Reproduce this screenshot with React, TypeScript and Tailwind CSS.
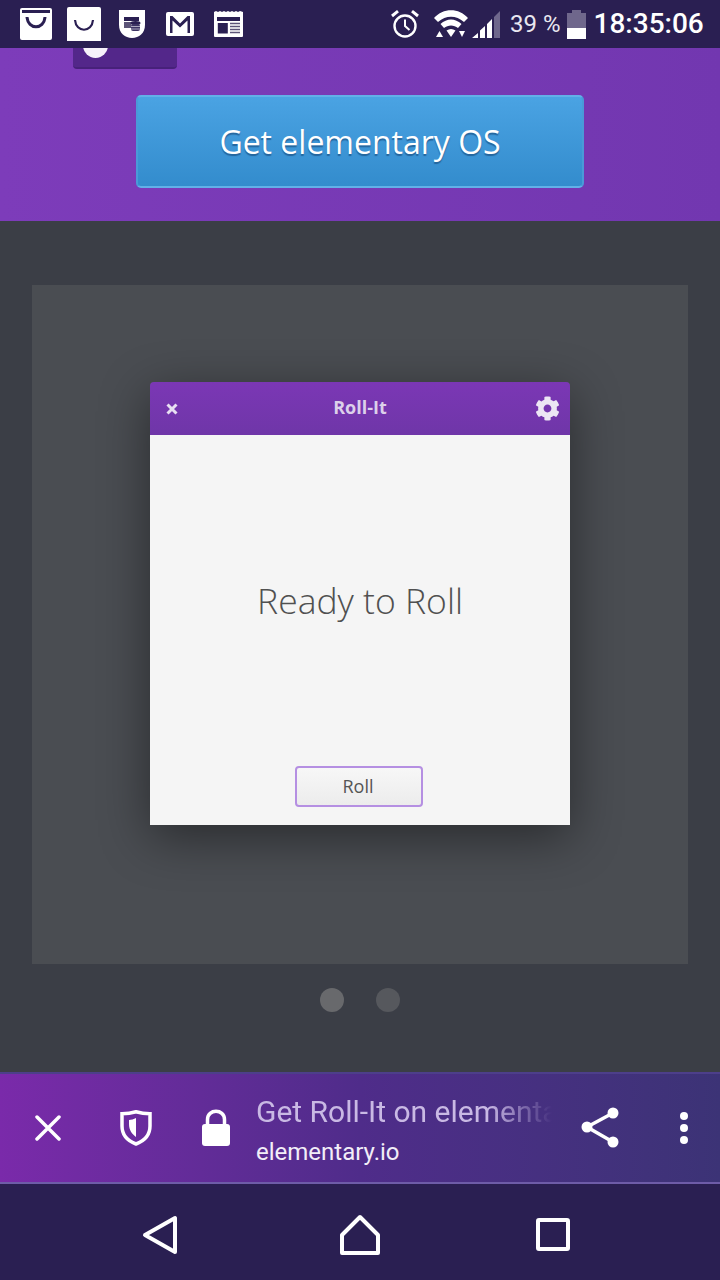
import { FaCog } from 'react-icons/fa';

function BagIcon() {
  return (
    <svg width="32" height="32" viewBox="0 0 32 32" className="ml-5">
      <rect x="0" y="0" width="32" height="32" rx="2" fill="#fff" />
      <rect x="2" y="2" width="28" height="3" fill="#2a1f52" />
      <path d="M7 9 C8 22 24 22 25 9" fill="none" stroke="#2a1f52" strokeWidth="3" />
    </svg>
  );
}

function BagIconAlt() {
  return (
    <svg width="34" height="34" viewBox="0 0 34 34" className="ml-[15px]">
      <path d="M2 0 H32 Q34 0 34 2 V34 H0 V2 Q0 0 2 0 Z" fill="#fff" />
      <path d="M8 13 C9 26 25 26 26 13" fill="none" stroke="#2a1f52" strokeWidth="2.200" />
    </svg>
  );
}

function ShieldIcon() {
  return (
    <svg width="28" height="28" viewBox="0 0 28 28" className="ml-[17px]">
      <path d="M1 0 H27 V15 C27 23 21 28 14 28 C7 28 1 23 1 15 Z" fill="#fff" />
      <rect x="6" y="7" width="15" height="4" fill="#2a1f52" />
      <rect x="6" y="12" width="7" height="6" fill="#5c5478" />
      <ellipse cx="17.500" cy="13" rx="5" ry="2" fill="#2a1f52" />
      <rect x="13" y="14" width="9" height="7" rx="2" fill="#3d3364" />
      <path d="M13 16.500 H22 M13 19 H22" stroke="#c9c5d6" strokeWidth="0.800" />
    </svg>
  );
}

function MailIcon() {
  return (
    <svg width="28" height="24" viewBox="0 0 28 24" className="ml-5">
      <rect x="0" y="0" width="28" height="24" rx="2" fill="#fff" />
      <path d="M4 21 V4 H6.500 L14 11.500 L21.500 4 H24 V21 H21.500 V8.500 L14 15.500 L6.500 8.500 V21 Z" fill="#2a1f52" />
    </svg>
  );
}

function NewsIcon() {
  return (
    <svg width="29" height="26" viewBox="0 0 29 26" className="ml-5">
      <path d="M0 1 L2 0 L4 1 L6 0 L8 1 L10 0 L12 1 L14 0 L16 1 L18 0 L20 1 L22 0 L24 1 L26 0 L29 1 V25 Q29 26 28 26 H1 Q0 26 0 25 Z" fill="#fff" />
      <rect x="3" y="6" width="23" height="4" fill="#2a1f52" />
      <rect x="3.800" y="12" width="10" height="10.500" fill="#2a1f52" />
      <path d="M16 12.500 H26 M16 15.500 H26 M16 18.500 H26 M16 21.500 H26" stroke="#5c5478" strokeWidth="1.600" />
    </svg>
  );
}

function AlarmIcon() {
  return (
    <svg width="28" height="28" viewBox="0 0 28 28">
      <circle cx="14" cy="16" r="10.500" fill="none" stroke="#fff" strokeWidth="2.400" />
      <path d="M14 9.500 V16 L18.500 20" fill="none" stroke="#fff" strokeWidth="2" />
      <path d="M1 6 L7 1.200 M27 6 L21 1.200" stroke="#fff" strokeWidth="3" />
    </svg>
  );
}

function WifiIcon() {
  return (
    <svg width="34" height="28" viewBox="0 0 34 28" className="ml-[15px]">
      <path d="M0 8 C9 -2.500 25 -2.500 34 8 L30 12 C22 5 12 5 4 12 Z" fill="#fff" />
      <path d="M6.500 14 C13 8 21 8 27.500 14 L24 18 C20 14.500 14 14.500 10 18 Z" fill="#fff" />
      <path d="M12.500 20.500 C15.500 18.500 18.500 18.500 21.500 20.500 L17 27 Z" fill="#fff" />
      <path d="M2 27 L5.500 21 L9 27 Z" fill="#fff" />
      <path d="M25 21 H31 L28 27 Z" fill="#fff" />
    </svg>
  );
}

function SignalIcon() {
  return (
    <svg width="28" height="28" viewBox="0 0 28 28" className="ml-1">
      <path d="M0 28 L6 23 V28 Z M8 28 V20.500 L13 16 V28 Z M15 28 V14 L20 9 V28 Z" fill="#fff" />
      <path d="M22 28 V7 L28 1 V28 Z" fill="#6f678c" />
    </svg>
  );
}

function BatteryIcon() {
  return (
    <div className="ml-[6px] flex h-[29px] w-[19px] flex-col items-center">
      <div className="h-[3px] w-[9px] bg-[#6f678c]" />
      <div className="h-[15px] w-full bg-[#6f678c]" />
      <div className="h-[11px] w-full bg-white" />
    </div>
  );
}

function CloseIcon() {
  return (
    <svg width="26" height="26" viewBox="0 0 26 26" className="ml-[35px]">
      <path d="M2 2 L24 24 M24 2 L2 24" stroke="#fff" strokeWidth="3.500" strokeLinecap="round" />
    </svg>
  );
}

function GuardIcon() {
  return (
    <svg width="32" height="36" viewBox="0 0 32 36" className="ml-[59px]">
      <path d="M16 1.800 C21 3.300 25 3.800 30 3.800 V16 C30 25 24 31 16 34 C8 31 2 25 2 16 V3.800 C7 3.800 11 3.300 16 1.800 Z" fill="none" stroke="#fff" strokeWidth="3.500" />
      <path d="M16 8 V27 C12 24 9 20 9 14 V10 C11 10 14 9 16 8 Z" fill="#fff" />
    </svg>
  );
}

function LockIcon() {
  return (
    <svg width="30" height="38" viewBox="0 0 30 38" className="ml-[49px]">
      <path d="M6.500 16 V10.500 C6.500 -0.500 23.500 -0.500 23.500 10.500 V16" fill="none" stroke="#fff" strokeWidth="3.500" />
      <rect x="1" y="15" width="28" height="22" rx="3" fill="#fff" />
    </svg>
  );
}

function ShareIcon() {
  return (
    <svg width="40" height="42" viewBox="0 0 40 42" className="ml-[28px]">
      <path d="M33 6 L7 20 L33 35" fill="none" stroke="#fff" strokeWidth="3.500" />
      <circle cx="33" cy="6" r="5.500" fill="#fff" />
      <circle cx="7" cy="20" r="5.500" fill="#fff" />
      <circle cx="33" cy="35" r="5.500" fill="#fff" />
    </svg>
  );
}

export default function App() {
  return (
    <div className="flex h-[1280px] w-[720px] flex-col overflow-hidden bg-[#3b3e46] font-['Open_Sans',sans-serif]">
      {/* status bar */}
      <div className="flex h-12 shrink-0 items-center bg-[#2a1f52]">
        <BagIcon />
        <BagIconAlt />
        <ShieldIcon />
        <MailIcon />
        <NewsIcon />
        <div className="ml-[148px]"><AlarmIcon /></div>
        <WifiIcon />
        <SignalIcon />
        <span className="ml-[10px] font-['Roboto',sans-serif] text-[24px] text-[#e9e7f0]">39 %</span>
        <BatteryIcon />
        <span className="ml-[8px] font-['Roboto',sans-serif] text-[28px] font-medium text-white">18:35:06</span>
      </div>

      {/* hero */}
      <div className="h-[173px] shrink-0 bg-gradient-to-r from-[#7d3cba] to-[#7237b0]">
        <div className="ml-[73px] flex h-[21px] w-[104px] items-end overflow-hidden rounded-b-[4px] border-b-2 border-[#47217a] bg-[#53278a] pb-[9px] pl-[10px]">
          <div className="h-[25px] w-[25px] shrink-0 rounded-full bg-[#f6f2fa]" />
        </div>
        <div className="mx-auto mt-[26px] flex h-[93px] w-[448px] items-center justify-center rounded-[5px] border-2 border-y-[#62b0e8] border-x-[#4a9ad8] bg-gradient-to-b from-[#4aa3e3] to-[#338ccd] text-[32px] text-white [text-shadow:0_2px_1px_rgba(20,70,120,0.6)]">
          Get elementary OS
        </div>
      </div>

      {/* screenshot carousel */}
      <div className="flex flex-1 flex-col items-center pt-16">
        <div className="flex h-[679px] w-[656px] shrink-0 justify-center bg-[#4a4d52] pt-[97px]">
          <div className="flex h-[443px] w-[420px] flex-col overflow-hidden rounded-t-[4px] shadow-[0_12px_50px_rgba(0,0,0,0.45)]">
            <div className="grid h-[53px] shrink-0 grid-cols-[1fr_auto_1fr] items-center bg-gradient-to-b from-[#7b37b5] to-[#6f36a8] px-[10px] pb-[2px]">
              <svg width="12" height="12" viewBox="0 0 12 12" className="ml-[6px] mt-[2px]">
                <path d="M1.500 1.500 L10.500 10.500 M10.500 1.500 L1.500 10.500" stroke="#e8e0f2" strokeWidth="3" />
              </svg>
              <span className="text-[18px] font-bold text-[#dcd0ea]">Roll-It</span>
              <FaCog size={25} color="#ece6f4" className="mt-[2px] justify-self-end" />
            </div>
            <div className="flex flex-1 flex-col items-center bg-[#f5f5f5]">
              <div className="mt-[139px] text-[35.500px] font-light leading-[52px] text-[#505050]">Ready to Roll</div>
              <div className="mr-[2px] mt-[140px] flex h-[41px] w-[128px] items-center justify-center rounded-[4px] border-2 border-[#b58fe2] bg-gradient-to-b from-[#f7f7f7] to-[#ececec] text-[18px] text-[#555]">
                <span className="mr-[2px]">Roll</span>
              </div>
            </div>
          </div>
        </div>
        <div className="mt-6 flex gap-8">
          <div className="h-6 w-6 rounded-full bg-[#68696c]" />
          <div className="h-6 w-6 rounded-full bg-[#56585d]" />
        </div>
      </div>

      {/* custom tab toolbar */}
      <div className="flex h-[112px] shrink-0 items-center border-y-2 border-t-[#4d3f8a] border-b-[#6e5ca8] bg-gradient-to-r from-[#7a2aaa] via-[#4f2c8a] to-[#3c3376]">
        <CloseIcon />
        <GuardIcon />
        <LockIcon />
        <div className="ml-[25px] w-[296px] pt-[5px] font-['Roboto',sans-serif]">
          <div className="whitespace-nowrap text-[30px] leading-[38px] text-[#c9b9e4] [mask-image:linear-gradient(to_right,black_78%,transparent_100%)]">
            Get Roll-It on elementa
          </div>
          <div className="mt-[5px] text-[24px] leading-[32px] text-[#f2eef8]">elementary.io</div>
        </div>
        <ShareIcon />
        <svg width="12" height="34" viewBox="0 0 12 34" className="ml-[58px]">
          <circle cx="6" cy="5" r="4" fill="#fff" />
          <circle cx="6" cy="17" r="4" fill="#fff" />
          <circle cx="6" cy="29" r="4" fill="#fff" />
        </svg>
      </div>

      {/* nav bar */}
      <div className="flex h-24 shrink-0 items-center bg-[#2a1f52] pt-[6px]">
        <svg width="36" height="40" viewBox="0 0 36 40" className="ml-[142px]">
          <path d="M33 3 V37 L3 20 Z" fill="none" stroke="#fff" strokeWidth="4" strokeLinejoin="round" />
        </svg>
        <svg width="42" height="42" viewBox="0 0 42 42" className="ml-[161px]">
          <path d="M21 3 L39 21 V39 H3 V21 Z" fill="none" stroke="#fff" strokeWidth="4" strokeLinejoin="round" />
        </svg>
        <svg width="34" height="34" viewBox="0 0 34 34" className="ml-[155px]">
          <rect x="2" y="2" width="30" height="29" rx="1" fill="none" stroke="#fff" strokeWidth="4" />
        </svg>
      </div>
    </div>
  );
}
